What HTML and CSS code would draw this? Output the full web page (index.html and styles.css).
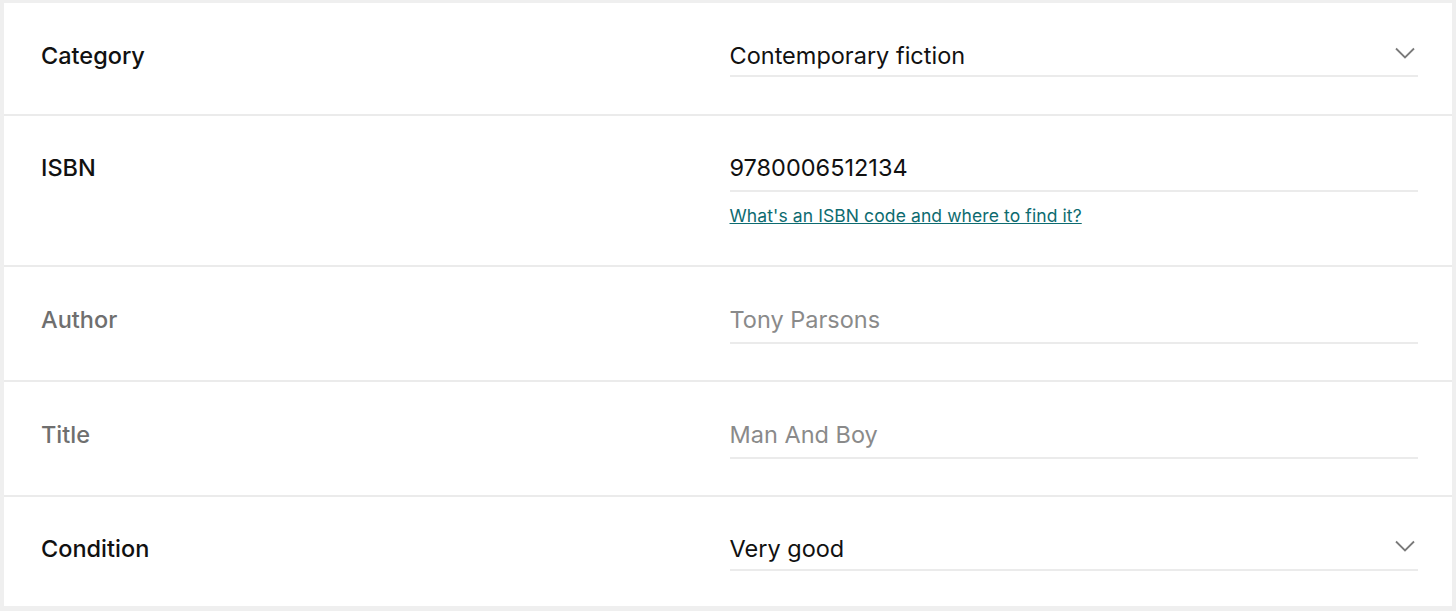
FILE: index.html
```html
<!DOCTYPE html>
<html>
<head>
<meta charset="utf-8">
<link rel="stylesheet" href="styles.css">
</head>
<body>
<div class="card">
  <div class="row first">
    <div class="label">Category</div>
    <div class="field">
      <div class="input select"><span>Contemporary fiction</span>
        <svg class="chev" width="20" height="12" viewBox="0 0 20 12"><path d="M1 1.5 L10 10.5 L19 1.5" fill="none" stroke="#7a7a7a" stroke-width="1.8"/></svg>
      </div>
    </div>
  </div>
  <div class="row isbn">
    <div class="label">ISBN</div>
    <div class="field">
      <div class="input"><span>9780006512134</span></div>
      <a class="help" href="#">What's an ISBN code and where to find it?</a>
    </div>
  </div>
  <div class="row disabled">
    <div class="label">Author</div>
    <div class="field">
      <div class="input"><span>Tony Parsons</span></div>
    </div>
  </div>
  <div class="row disabled">
    <div class="label">Title</div>
    <div class="field">
      <div class="input"><span>Man And Boy</span></div>
    </div>
  </div>
  <div class="row last">
    <div class="label">Condition</div>
    <div class="field">
      <div class="input select"><span>Very good</span>
        <svg class="chev" width="20" height="12" viewBox="0 0 20 12"><path d="M1 1.5 L10 10.5 L19 1.5" fill="none" stroke="#7a7a7a" stroke-width="1.8"/></svg>
      </div>
    </div>
  </div>
</div>
</body>
</html>
```
FILE: styles.css
```css
html, body {
  margin: 0;
  padding: 0;
  background: #efefef;
  font-family: Inter, "Noto Sans", sans-serif;
}
body {
  padding: 3px 4px 5px 4px;
}
.card {
  background: #fff;
  height: 603px;
  box-sizing: border-box;
}
.row {
  display: grid;
  grid-template-columns: 1fr 1fr;
  padding: 39px 34px 36px 37px;
  border-bottom: 2px solid #ebebeb;
}
.row.first {
  padding-bottom: 37px;
}
.row.isbn {
  padding-top: 38px;
  padding-bottom: 38px;
}
.row.last {
  padding-top: 38px;
  border-bottom: none;
}
.label {
  font-size: 23.5px;
  line-height: 28px;
  font-weight: 500;
  color: #111;
}
.field {
  display: flex;
  flex-direction: column;
}
.input {
  display: flex;
  align-items: center;
  justify-content: space-between;
  font-size: 23.5px;
  line-height: 28px;
  color: #111;
  padding-bottom: 8px;
  border-bottom: 2px solid #ebebeb;
}
.first .input {
  padding-bottom: 5px;
}
.last .input {
  padding-bottom: 6px;
}
.chev {
  margin-right: 3px;
  margin-bottom: 6px;
}
.disabled .label {
  color: #6f6f6f;
}
.disabled .input {
  color: #8a8a8a;
}
.help {
  margin-top: 13px;
  font-size: 17.5px;
  line-height: 22px;
  letter-spacing: 0.1px;
  color: #0d6b70;
  text-decoration: underline;
  align-self: flex-start;
}
```
